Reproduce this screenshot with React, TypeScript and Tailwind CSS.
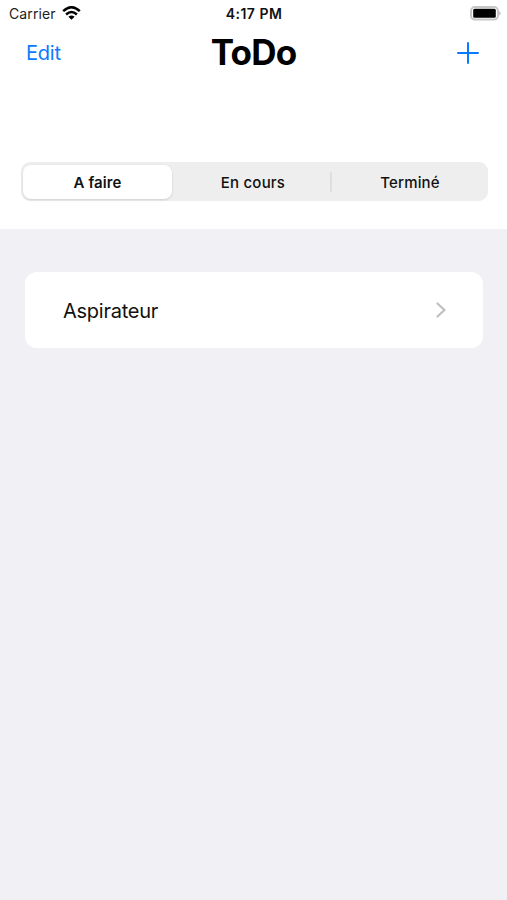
export default function App() {
  return (
    <div className="flex h-[900px] w-[507px] flex-col overflow-hidden bg-[#f1f0f5] font-['Inter',sans-serif] text-black">
      <header className="h-[229px] bg-white">
        <div className="grid h-[27px] grid-cols-3 items-center pl-[9px] pr-[6px]">
          <div className="flex items-center gap-[6px] text-[#222]">
            <span className="text-[14px] tracking-[0.12px]">Carrier</span>
            <svg className="mb-[2px]" width="19" height="14" viewBox="0 0 19 14" fill="none" stroke="black" strokeWidth="2.5">
              <path d="M1.2 5.2 Q9.5 -2.6 17.8 5.2" />
              <path d="M4.1 8.5 Q9.5 3.5 14.9 8.5" />
              <path d="M9.5 13.8 L6.4 10.7 Q9.5 8.1 12.6 10.7Z" fill="black" stroke="none" />
            </svg>
          </div>
          <span className="pr-[2px] text-center text-[14px] font-semibold leading-5 tracking-[0.5px] text-[#111]">4:17 PM</span>
          <svg className="justify-self-end" width="31" height="15" viewBox="0 0 31 15">
            <rect x="1" y="1" width="27" height="12.6" rx="4" fill="#fff" stroke="#c6c6c6" strokeWidth="2" />
            <rect x="3.2" y="2.8" width="22.6" height="9" rx="1.5" />
            <path d="M29.2 4.8 Q32 7.3 29.2 9.8Z" fill="#bbb" />
          </svg>
        </div>
        <div className="grid h-[52px] grid-cols-3 items-center px-[26px]">
          <button className="text-left text-[20px] tracking-[-0.2px] text-[#0a7aff]">Edit</button>
          <h1 className="-mt-px text-center text-[35px] font-bold tracking-[-0.8px]">ToDo</h1>
          <button className="mr-px justify-self-end text-[#0a7aff]" aria-label="Add">
            <svg width="24" height="24" viewBox="0 0 24 24" stroke="currentColor" strokeWidth="2" strokeLinecap="round"><path d="M12 2v20M2 12h20" /></svg>
          </button>
        </div>
        <div className="ml-[21px] mr-[19px] mt-[83px] flex h-[39px] items-center rounded-[9px] bg-[#eeeeee] px-[2px] text-[15px] font-medium text-[#111]">
          <button className="h-[34px] w-[149px] rounded-[8px] bg-white pt-[3px] font-semibold tracking-[0.1px] shadow">A faire</button>
          <button className="w-[158px] pl-[4px] pt-[3px] tracking-[0.2px]">En cours</button>
          <span className="h-5 w-[2px] rounded-full bg-[#dedede]" />
          <button className="flex-1 pl-[2px] pt-[3px] tracking-[0.15px]">Terminé</button>
        </div>
      </header>
      <main className="pl-[25px] pr-[24px] pt-[43px]">
        <button className="flex h-[76px] w-full items-center justify-between rounded-[12px] bg-white pl-[38px] pr-[37px] text-[20px] text-[#111]">
          <span className="pt-px tracking-[-0.25px]">Aspirateur</span>
          <svg width="10" height="16" viewBox="0 0 10 16" fill="none" stroke="#bfbfc1" strokeWidth="2.2" strokeLinecap="round"><path d="M1.5 1.5l7 6.5-7 6.5" /></svg>
        </button>
      </main>
    </div>
  );
}
